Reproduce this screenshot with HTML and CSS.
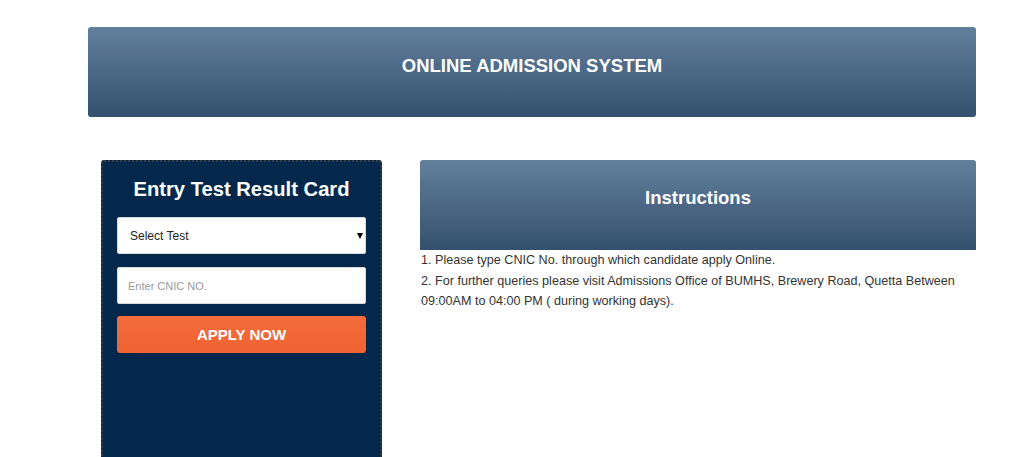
FILE: index.html
```html
<!DOCTYPE html>
<html lang="en">
<head>
<meta charset="utf-8">
<title>Online Admission System</title>
<link rel="stylesheet" href="styles.css">
</head>
<body>
<div class="page">
  <header class="banner">
    <h1 class="banner-title">ONLINE ADMISSION SYSTEM</h1>
  </header>
  <div class="content">
    <section class="result-card">
      <h2 class="card-title">Entry Test Result Card</h2>
      <form class="card-form">
        <div class="select-wrap">
          <select class="field field-select">
            <option>Select Test</option>
          </select>
        </div>
        <input class="field field-input" type="text" placeholder="Enter CNIC NO.">
        <button class="apply-btn" type="button">APPLY NOW</button>
      </form>
    </section>
    <section class="instructions">
      <div class="instr-head">
        <h2 class="instr-title">Instructions</h2>
      </div>
      <div class="instr-body">
        <p>1. Please type CNIC No. through which candidate apply Online.</p>
        <p>2. For further queries please visit Admissions Office of BUMHS, Brewery Road, Quetta Between 09:00AM to 04:00 PM ( during working days).</p>
      </div>
    </section>
  </div>
</div>
</body>
</html>
```
FILE: styles.css
```css
* { box-sizing: border-box; }
html, body { margin: 0; padding: 0; background: #fff; }
body {
  font-family: "Liberation Sans", Arial, sans-serif;
  color: #333;
  overflow: hidden;
  height: 457px;
}
.page {
  width: 888px;
  margin-left: 88px;
  padding-top: 27px;
}
.banner {
  height: 90px;
  border-radius: 3px;
  background: linear-gradient(to bottom, #627f9c 0%, #34506f 100%);
  padding-top: 29px;
  text-align: center;
}
.banner-title {
  margin: 0;
  font-size: 18.5px;
  line-height: 20px;
  font-weight: bold;
  color: #fff;
}
.content {
  display: flex;
  margin-top: 43px;
  padding-left: 13px;
}
.result-card {
  width: 281px;
  height: 297px;
  flex: none;
  background: #03284b;
  border: 2px dotted #3d3d40;
  border-bottom: none;
  border-radius: 3px 3px 0 0;
  padding: 16px 14px;
}
.card-title {
  margin: 0 0 17px;
  font-size: 20.2px;
  line-height: 22px;
  font-weight: bold;
  color: #fff;
  text-align: center;
}
.card-form {
  display: flex;
  flex-direction: column;
}
.select-wrap {
  position: relative;
  margin-bottom: 13px;
}
.select-wrap::after {
  content: "";
  position: absolute;
  right: 3px;
  top: 16px;
  border-left: 3.5px solid transparent;
  border-right: 3.5px solid transparent;
  border-top: 6px solid #000;
}
.field {
  display: block;
  width: 100%;
  height: 37px;
  background: #fff;
  border: 1px solid #d6d9dd;
  border-radius: 2px;
  font-family: "Liberation Sans", Arial, sans-serif;
  outline: none;
}
.field-select {
  appearance: none;
  -webkit-appearance: none;
  font-size: 12px;
  color: #222;
  padding: 0 0 0 12px;
}
.field-input {
  font-size: 11px;
  padding: 0 10px;
  margin-bottom: 12px;
  height: 37px;
}
.field-input::placeholder { color: #9a9a9a; }
.apply-btn {
  height: 37px;
  border: none;
  border-radius: 3px;
  background: linear-gradient(to bottom, #f46c3b 0%, #ef6331 100%);
  color: #fff;
  font-family: "Liberation Sans", Arial, sans-serif;
  font-weight: bold;
  font-size: 15px;
  padding: 0;
}
.instructions {
  margin-left: 38px;
  flex: 1;
}
.instr-head {
  height: 90px;
  border-radius: 3px 3px 0 0;
  background: linear-gradient(to bottom, #627f9c 0%, #34506f 100%);
  padding-top: 28px;
  text-align: center;
}
.instr-title {
  margin: 0;
  font-size: 18.5px;
  line-height: 20px;
  font-weight: bold;
  color: #fff;
}
.instr-body {
  padding-left: 1px;
  font-size: 12.6px;
  line-height: 20.5px;
  color: #333;
}
.instr-body p { margin: 0; }
```
